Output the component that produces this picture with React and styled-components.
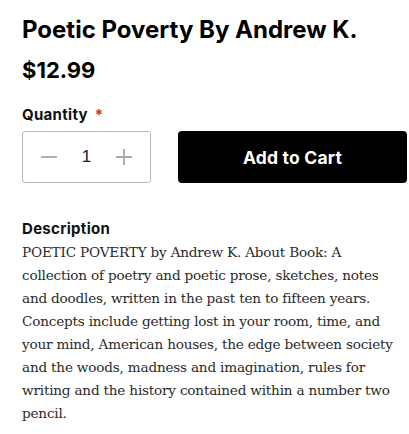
import styled, { createGlobalStyle } from 'styled-components';

const GlobalStyle = createGlobalStyle`
	body {
		margin: 0;
		background: #fff;
		color: #000;
	}
`;

const Page = styled.div`
	width: 385px;
	padding: 14px 0 0 22px;
	font-family: 'Inter', 'Liberation Sans', sans-serif;
`;

const Title = styled.h1`
	margin: 0;
	font-size: 24px;
	line-height: 32px;
	font-weight: 700;
`;

const Price = styled.div`
	margin-top: 10px;
	font-size: 22px;
	line-height: 28px;
	font-weight: 700;
`;

const Label = styled.div`
	margin-top: 21px;
	font-size: 15px;
	line-height: 20px;
	font-weight: 700;
	letter-spacing: 0.3px;
	color: #111;
`;

const Required = styled.span`
	color: #e02b27;
	margin-left: 7px;
`;

const Actions = styled.div`
	display: flex;
	gap: 27px;
	margin-top: 6px;
`;

const Stepper = styled.div`
	box-sizing: border-box;
	width: 129px;
	height: 52px;
	border: 1px solid #b8b8b8;
	border-radius: 3px;
	display: flex;
	align-items: center;
	justify-content: space-between;
	padding: 0 16px;
`;

const StepButton = styled.button`
	border: 0;
	background: none;
	padding: 0;
	width: 20px;
	height: 20px;
	display: flex;
	align-items: center;
	justify-content: center;
	color: #a8a8a8;
`;

const Count = styled.span`
	font-size: 17px;
	color: #222;
	font-family: 'Liberation Sans', sans-serif;
`;

const CartButton = styled.button`
	flex: 1;
	height: 52px;
	border: 0;
	border-radius: 4px;
	background: #000;
	color: #fff;
	font-family: 'Inter', 'Liberation Sans', sans-serif;
	font-size: 17.5px;
	font-weight: 700;
	letter-spacing: 0.2px;
`;

const DescLabel = styled.div`
	margin-top: 36px;
	font-size: 15px;
	line-height: 20px;
	font-weight: 700;
	letter-spacing: 0.3px;
	color: #111;
`;

const Body = styled.p`
	margin: 2px 0 0;
	font-family: 'DejaVu Serif', serif;
	font-size: 13.6px;
	letter-spacing: -0.2px;
	line-height: 23px;
	color: #2a2a2a;
`;

const Icon = ({ d }) => (
	<svg width="20" height="20" viewBox="0 0 20 20" fill="none" stroke="currentColor" strokeWidth="1.8">
		<path d={d} />
	</svg>
);

export default function App() {
	return (
		<Page>
			<GlobalStyle />
			<Title>Poetic Poverty By Andrew K.</Title>
			<Price>$12.99</Price>
			<Label>
				Quantity<Required>*</Required>
			</Label>
			<Actions>
				<Stepper>
					<StepButton aria-label="Decrease">
						<Icon d="M2 10h16" />
					</StepButton>
					<Count>1</Count>
					<StepButton aria-label="Increase">
						<Icon d="M2 10h16M10 2v16" />
					</StepButton>
				</Stepper>
				<CartButton>Add to Cart</CartButton>
			</Actions>
			<DescLabel>Description</DescLabel>
			<Body>
				POETIC POVERTY by Andrew K. About Book: A<br />
				collection of poetry and poetic prose, sketches, notes<br />
				and doodles, written in the past ten to fifteen years.<br />
				Concepts include getting lost in your room, time, and<br />
				your mind, American houses, the edge between society<br />
				and the woods, madness and imagination, rules for<br />
				writing and the history contained within a number two<br />
				pencil.
			</Body>
		</Page>
	);
}
